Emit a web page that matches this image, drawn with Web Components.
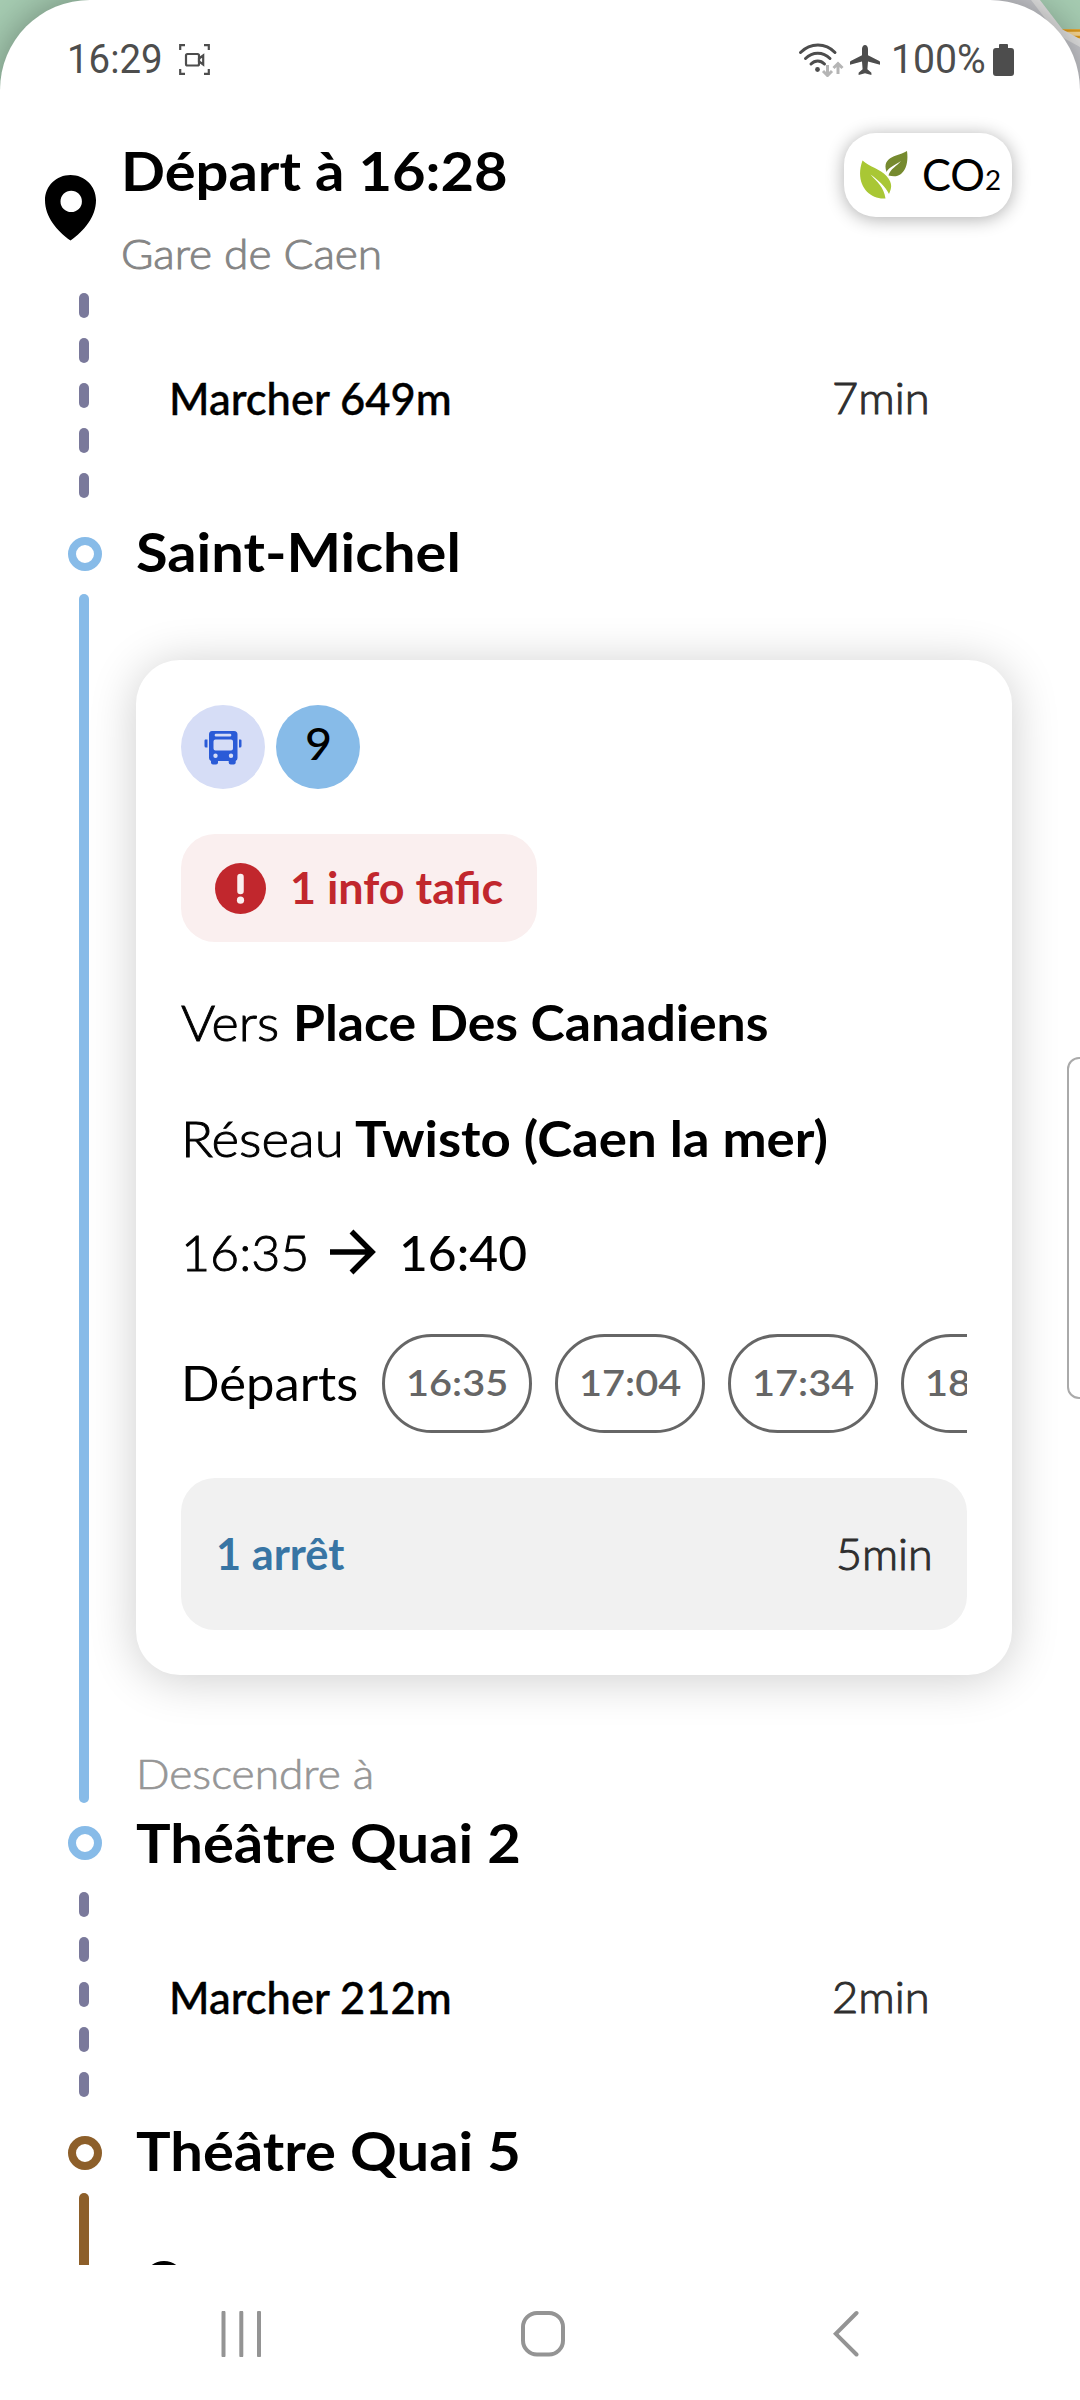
<!DOCTYPE html>
<html lang="fr">
<head>
<meta charset="utf-8">
<title>Itinéraire</title>
<style>
  html, body { margin: 0; padding: 0; background: #fff; }
  body { font-family: Lato, "Open Sans", sans-serif; color: #000; width: 1080px; height: 2400px; overflow: hidden; }
</style>
</head>
<body>
<trip-screen></trip-screen>
<script>
const define = (name, html, setup) => {
  const template = document.createElement('template');
  template.innerHTML = html;
  customElements.define(name, class extends HTMLElement {
    connectedCallback() {
      if (this.shadowRoot) return;
      this.attachShadow({ mode: 'open' }).appendChild(template.content.cloneNode(true));
      if (setup) setup(this, this.shadowRoot);
    }
  });
};

/* Status bar: clock on the left, system indicators on the right */
define('status-bar', `
<style>
  :host { display: flex; align-items: center; justify-content: space-between; height: 119px; box-sizing: border-box; padding: 0 66px 0 67px; font-family: Roboto, sans-serif; color: #4d4d4d; }
  .group { display: flex; align-items: center; }
  svg { display: block; }
</style>
<div class="group">
  <fit-label w="96" size="40" line="48" font="Roboto">16:29</fit-label>
  <svg width="31" height="31" viewBox="0 0 31 31" style="margin-left:16px" fill="none" stroke="#4d4d4d" stroke-width="2.2">
    <path d="M1.2 6V1.2H6M25 1.2h4.8V6M29.800 25v4.800H25M6 29.800H1.200V25"/>
    <rect x="7" y="10" width="13" height="11.500" rx="1.500"/>
    <path d="M20 14.500l4.200-3v9l-4.200-3z"/>
  </svg>
</div>
<div class="group">
  <svg width="46" height="34" viewBox="0 0 46 34" fill="none" stroke="#4d4d4d" stroke-width="3" stroke-linecap="round">
    <path d="M2.500 9.500C12.500-.5 27.500-.5 37 9.500M7.500 15.500c7-7 17.500-7 24.500 0M13 21c4-4 9.500-4 13.500 0"/>
    <circle cx="19.500" cy="26.500" r="2.400" fill="#4d4d4d" stroke="none"/>
    <path stroke="#b5b5b5" stroke-linecap="butt" d="M29.500 22v10.500M25 28l4.500 4.500L34 28M40 31V20.500M35.500 25l4.500-4.500 4.500 4.500"/>
  </svg>
  <svg width="30" height="30" viewBox="0 0 30 30" style="margin-left:6px" fill="#4d4d4d">
    <path d="M15 0c1.800 0 3 1.700 3 4v6.300l11.300 5.800c.5.300.7.800.7 1.400v2.300l-12-3.200-.6 7.600 4 3.500V30L15 28.200 8.600 30v-2.300l4-3.500-.6-7.600-12 3.200v-2.300c0-.6.2-1.100.7-1.400L12 10.300V4c0-2.300 1.200-4 3-4z"/>
  </svg>
  <fit-label w="95" size="40" line="48" font="Roboto" style="margin-left:11px">100%</fit-label>
  <svg width="21" height="32" viewBox="0 0 21 32" style="margin-left:7px" fill="#4d4d4d"><path d="M7 0h7a1 1 0 0 1 1 1v3h3a3 3 0 0 1 3 3v22a3 3 0 0 1-3 3H3a3 3 0 0 1-3-3V7a3 3 0 0 1 3-3h3V1a1 1 0 0 1 1-1z"/></svg>
</div>`);

/* Departure heading with the carbon footprint pill */
define('trip-header', `
<style>
  :host { display: flex; align-items: flex-start; height: 174px; box-sizing: border-box; padding: 14px 68px 0 45px; }
  .pin { display: block; margin-top: 42px; }
  .titles { display: flex; flex-direction: column; gap: 27px; margin: 8px 0 0 25px; flex: 1; }
  .pill { display: flex; align-items: center; width: 168px; height: 84px; box-sizing: border-box; padding-left: 14px; border-radius: 32px; background: #fff; box-shadow: 0 2px 18px rgba(0,0,0,.32); }
  .co { display: flex; align-items: flex-end; margin: 0 0 2px 14px; }
</style>
<svg class="pin" width="51" height="66" viewBox="0 0 51 66"><path fill-rule="evenodd" d="M25.500 0C39.600 0 51 11 51 25c0 17-12 31-25.500 40.500C12 56 0 42 0 25 0 11 11.400 0 25.500 0zm.7 15.700a10.700 10.700 0 1 0 0 21.400 10.700 10.700 0 0 0 0-21.400z"/></svg>
<div class="titles">
  <fit-label w="387" size="54" line="60" weight="700">Départ à 16:28</fit-label>
  <fit-label w="261" size="42" line="50" color="#858585" weight="300" stroke=".9">Gare de Caen</fit-label>
</div>
<div class="pill">
  <svg width="50" height="50" viewBox="0 0 50 50">
    <path fill="#a9c735" d="M4.500 10.500C12 17 22 19 28.500 26c6 7 5.500 11 2.500 18C27 36 20 30 12.500 24.500 19 32 26 37 27.500 48.500 11 50-4 34 4.500 10.500z"/>
    <path fill="#768a2f" d="M49 1c1.500 11-1 19-6 23-4 3-8 2.500-12.500 1.500C32 19 39 16 43 11c-6 4-12 6-14.500 11C25 12 31 8 38 5.500 42 4 46 3 49 1z"/>
  </svg>
  <div class="co"><fit-label w="63" size="44" line="50" weight="400">CO</fit-label><fit-label w="16" size="26" line="38">2</fit-label></div>
</div>`);

/* Named stop with its ring on the rail */
define('trip-stop', `
<style>
  :host { display: flex; align-items: center; height: 79px; box-sizing: border-box; padding-left: 68px; color: #000; }
  i { width: 34px; height: 34px; box-sizing: border-box; border: 8px solid var(--line, #87bbe8); border-radius: 50%; margin-right: 34px; }
</style>
<i></i><slot></slot>`);

/* Walking section: dashed rail, distance, duration */
define('walk-leg', `
<style>
  :host { display: flex; align-items: flex-start; height: 222px; box-sizing: border-box; padding: 0 150px 0 79px; }
  .rail { display: flex; flex-direction: column; gap: 20px; width: 10px; margin-right: 80px; }
  .rail i { height: 25px; border-radius: 5px; background: #7a799b; }
  .row { display: flex; flex: 1; height: 209px; align-items: center; justify-content: space-between; }
</style>
<div class="rail"><i></i><i></i><i></i><i></i><i></i></div>
<div class="row"><slot name="distance"></slot><slot name="time"></slot></div>`);

/* Ride section: solid rail next to its card */
define('ride-leg', `
<style>
  :host { display: flex; padding: 0 68px 0 79px; }
  .rail { width: 10px; border-radius: 5px; background: var(--line, #87bbe8); margin-right: 47px; flex: none; }
  .body { flex: 1; min-width: 0; }
</style>
<div class="rail"></div><div class="body"><slot></slot></div>`);

define('line-badges', `
<style>
  :host { display: flex; gap: 11px; }
  div { width: 84px; height: 84px; border-radius: 50%; display: flex; align-items: center; justify-content: center; box-sizing: border-box; }
  .mode { background: #d6ddf6; }
  .line { background: #87bbe8; padding-bottom: 8px; }
</style>
<div class="mode">
  <svg width="38" height="35" viewBox="0 0 38 35"><path fill="#2a5bd7" fill-rule="evenodd" d="M8 1h22q3.500 0 3.500 3.500V28q0 2-1.800 3v1.500q0 2-2 2h-3q-2 0-2-2V31H14v1.500q0 2-2 2H9q-2 0-2-2V31q-2-1-2-3V4.500Q5 1 8 1zm4 2.800a1 1 0 0 0 0 2.700h14a1 1 0 0 0 0-2.700zm-.5 5.700q-2 0-2 2v7q0 2 2 2H27q2 0 2-2v-7q0-2-2-2zM11.500 23.500a2.200 2.200 0 1 0 0 4.400 2.200 2.200 0 0 0 0-4.400zm15.500 0a2.200 2.200 0 1 0 0 4.400 2.200 2.200 0 0 0 0-4.400zM1 9.500h2.500v8H2q-1.500 0-1.500-1.500v-5.500zM35 9.500h1.500q1 0 1 1V16q0 1.500-1.500 1.500h-1z"/></svg>
</div>
<div class="line"><fit-label w="27" size="45" line="50" weight="500">9</fit-label></div>`);

define('traffic-info', `
<style>
  :host { display: flex; align-items: center; width: 356px; height: 108px; box-sizing: border-box; padding-left: 34px; border-radius: 34px; background: #faefef; color: #c1272d; }
  svg { margin-right: 24px; }
</style>
<svg width="51" height="51" viewBox="0 0 51 51"><circle cx="25.500" cy="25.500" r="25.500" fill="#c1272d"/><path d="M25.500 14v14" stroke="#faefef" stroke-width="6.500" stroke-linecap="round"/><circle cx="25.500" cy="37.200" r="3.600" fill="#faefef"/></svg>
<slot></slot>`);

define('time-chip', `
<style>
  :host { display: flex; align-items: center; justify-content: center; flex: none; width: 150px; height: 99px; box-sizing: border-box; border: 3px solid #666; border-radius: 50px; color: #666; padding-bottom: 3px; }
</style><slot></slot>`);

define('ride-card', `
<style>
  :host { display: flex; flex-direction: column; height: 1015px; box-sizing: border-box; padding: 45px; border-radius: 44px; background: #fff; box-shadow: 0 4px 48px rgba(0,0,0,.2); }
  traffic-info { margin-top: 45px; }
  .line { display: flex; align-items: center; height: 60px; }
  .chips { display: flex; gap: 23px; overflow: hidden; flex: 1; margin-left: 23px; }
  .stops { display: flex; align-items: center; justify-content: space-between; height: 152px; box-sizing: border-box; padding: 0 34px 0 36px; border-radius: 34px; background: #f1f1f1; margin-top: 45px; }
</style>
<line-badges></line-badges>
<traffic-info><fit-label w="213" size="43" line="50" weight="700">1 info tafic</fit-label></traffic-info>
<div class="line" style="margin-top:50px">
  <fit-label w="98" size="49" line="60" weight="300" stroke=".9">Vers</fit-label>
  <fit-label w="475" size="49" line="60" weight="700" style="margin-left:14px">Place Des Canadiens</fit-label>
</div>
<div class="line" style="margin-top:56px">
  <fit-label w="163" size="49" line="60" weight="300" stroke=".9">Réseau</fit-label>
  <fit-label w="473" size="49" line="60" weight="700" style="margin-left:11px">Twisto (Caen la mer)</fit-label>
</div>
<div class="line" style="margin-top:54px">
  <fit-label w="128" size="49" line="60" weight="300" stroke=".9">16:35</fit-label>
  <svg width="46" height="46" viewBox="0 0 46 46" style="margin-left:21px" fill="none" stroke="#000" stroke-width="5.500"><path d="M0 23h41M21.500 2.500L42 23 21.500 43.500"/></svg>
  <fit-label w="128" size="49" line="60" weight="500" style="margin-left:23px">16:40</fit-label>
</div>
<div class="line" style="height:99px;margin-top:52px">
  <fit-label w="177" size="49" line="60" weight="400" style="margin-bottom:3px">Départs</fit-label>
  <div class="chips" style="margin-left:24px">
    <time-chip><fit-label w="102" size="37" line="44" weight="600">16:35</fit-label></time-chip>
    <time-chip><fit-label w="102" size="37" line="44" weight="600">17:04</fit-label></time-chip>
    <time-chip><fit-label w="102" size="37" line="44" weight="600">17:34</fit-label></time-chip>
    <time-chip><fit-label w="102" size="37" line="44" weight="600">18:04</fit-label></time-chip>
  </div>
</div>
<div class="stops">
  <fit-label w="128" size="43" line="50" weight="700" color="#3875a4" style="margin-left:-1px">1 arrêt</fit-label>
  <fit-label w="97" size="43" line="50" color="#2e2e2e" weight="300" stroke="1">5min</fit-label>
</div>`);

/* Three-button system navigation */
define('nav-bar', `
<style>
  :host { display: flex; align-items: center; height: 135px; box-sizing: border-box; padding: 3px 221px 0 221px; justify-content: space-between; }
  svg { display: block; fill: none; stroke: #949494; stroke-width: 4; stroke-linecap: round; }
</style>
<svg width="41" height="46" viewBox="0 0 41 46"><path d="M2.500 1.500v43M20.300 1.500v43M38 1.500v43"/></svg>
<svg width="44" height="46" viewBox="0 0 44 46" style="margin-right:9px"><rect x="2" y="2" width="40" height="41.500" rx="14"/></svg>
<svg width="26" height="48" viewBox="0 0 26 48"><path d="M23.500 3L2.800 23.800 23.500 44.500"/></svg>`);

define('trip-screen', `
<style>
  :host { display: block; position: relative; width: 1080px; height: 2400px; overflow: hidden; }
  .map { position: absolute; inset: 0 0 auto 0; display: block; }
  .sheet { position: relative; display: flex; flex-direction: column; height: 2400px; border-radius: 90px 90px 0 0; background: #fff; box-shadow: 0 0 40px rgba(0,0,0,.35); overflow: hidden; }
  .scroll { height: 2265px; overflow: hidden; flex: none; }
  .edge { position: absolute; left: 1067px; top: 1057px; width: 40px; height: 342px; box-sizing: border-box; border: 2.500px solid #aaa; border-radius: 12px; background: #fff; }
</style>
<svg class="map" width="1080" height="120" viewBox="0 0 1080 120">
  <rect width="1080" height="120" fill="#a6ccb2"/>
  <path d="M960 0h76l25 30 19 14v76H960z" fill="#c9cacf"/>
  <path d="M1060 29h20v12h-10z" fill="#f6d694"/>
  <path d="M1060 30.500h20M1073 37h7" stroke="#dd9a1c" stroke-width="2.500"/>
  <path d="M1034-2l26 34 22 12" fill="none" stroke="#e3e3e3" stroke-width="7"/>
</svg>
<div class="sheet">
  <div class="scroll">
    <status-bar></status-bar>
    <trip-header></trip-header>
    <walk-leg>
      <fit-label slot="distance" w="283" size="43.500" line="50" weight="500" stroke=".4">Marcher 649m</fit-label>
      <fit-label slot="time" w="98" size="43" line="50" color="#2e2e2e" weight="300" stroke="1">7min</fit-label>
    </walk-leg>
    <trip-stop style="padding-bottom:1px"><fit-label w="325" size="54" line="60" weight="700" style="margin-bottom:4px">Saint-Michel</fit-label></trip-stop>
    <ride-leg>
      <ride-card style="margin-top:66px"></ride-card>
      <fit-label w="238" size="42" line="50" weight="300" stroke=".7" color="#969696" style="margin:73px 0 5px">Descendre à</fit-label>
    </ride-leg>
    <trip-stop style="margin-bottom:10px"><fit-label w="385" size="54" line="60" weight="700">Théâtre Quai 2</fit-label></trip-stop>
    <walk-leg>
      <fit-label slot="distance" w="283" size="43.500" line="50" weight="500" stroke=".4">Marcher 212m</fit-label>
      <fit-label slot="time" w="98" size="43" line="50" color="#2e2e2e" weight="300" stroke="1">2min</fit-label>
    </walk-leg>
    <trip-stop style="--line:#8d5f2a;padding-bottom:1px"><fit-label w="385" size="54" line="60" weight="700" style="margin-bottom:4px">Théâtre Quai 5</fit-label></trip-stop>
    <ride-leg style="--line:#8d5f2a;height:120px">
      <svg width="60" height="50" viewBox="0 0 60 50" style="display:block;margin:66px 0 0 0"><circle cx="28" cy="22.500" r="18.500" fill="none" stroke="#000" stroke-width="4"/></svg>
    </ride-leg>
  </div>
  <nav-bar></nav-bar>
</div>
<div class="edge"></div>`);

/* Text run condensed or expanded to a given advance width */
define('fit-label', `
<style>
  :host { display: block; flex: none; white-space: nowrap; }
  span { display: inline-block; transform-origin: 0 50%; }
</style><span><slot></slot></span>`, (host, root) => {
  const a = n => host.getAttribute(n);
  const span = root.querySelector('span');
  host.style.fontSize = a('size') + 'px';
  host.style.lineHeight = host.style.height = a('line') + 'px';
  host.style.fontWeight = a('weight') || 400;
  if (a('color')) host.style.color = a('color');
  if (a('font')) host.style.fontFamily = a('font') + ', sans-serif';
  if (a('stroke')) span.style.webkitTextStroke = a('stroke') + 'px currentColor';
  const width = +a('w');
  const natural = span.offsetWidth;
  host.style.width = width + 'px';
  if (natural) span.style.transform = 'scaleX(' + (width / natural).toFixed(4) + ')';
});
</script>
</body>
</html>
